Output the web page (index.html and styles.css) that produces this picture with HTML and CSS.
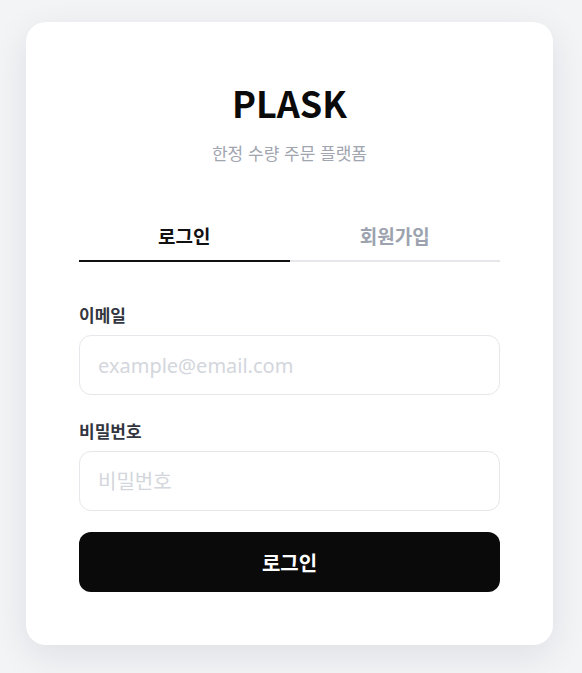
FILE: index.html
```html
<!DOCTYPE html>
<html lang="ko">
  <head>
    <meta charset="utf-8">
    <meta name="viewport" content="width=device-width, initial-scale=1">
    <title>PLASK 로그인</title>
    <link rel="stylesheet" href="styles.css">
  </head>
  <body>
    <main class="auth-card">
      <header class="brand">
        <h1 class="brand-title">PLASK</h1>
        <p class="brand-tagline">한정 수량 주문 플랫폼</p>
      </header>

      <nav class="tabs" aria-label="인증">
        <button class="tab active" type="button" aria-current="page">로그인</button>
        <button class="tab" type="button">회원가입</button>
      </nav>

      <form class="login-form">
        <div class="field">
          <label class="field-label" for="email">이메일</label>
          <input class="field-input" id="email" type="email" placeholder="example@email.com">
        </div>
        <div class="field">
          <label class="field-label" for="password">비밀번호</label>
          <input class="field-input" id="password" type="password" placeholder="비밀번호">
        </div>
        <button class="submit" type="submit">로그인</button>
      </form>
    </main>
  </body>
</html>
```

FILE: styles.css
```css
body {
  margin: 0;
  padding: 22px 0 28px 26px;
  background: #f3f4f6;
  font-family: "Noto Sans CJK KR", "Noto Sans", sans-serif;
  color: #111;
}

.auth-card {
  box-sizing: border-box;
  width: 527px;
  padding: 59px 53px 53px;
  background: #fff;
  border-radius: 20px;
  box-shadow: 0 10px 36px rgba(15, 23, 42, 0.09);
}

.brand {
  text-align: center;
}

.brand-title {
  margin: 0;
  font-size: 36px;
  line-height: 43px;
  font-weight: 700;
  color: #0a0a0a;
}

.brand-tagline {
  margin: 18px 0 0;
  font-size: 17px;
  line-height: 22px;
  color: #a1a5b0;
}

.tabs {
  display: grid;
  grid-template-columns: 1fr 1fr;
  margin-top: 48px;
}

.tab {
  padding: 12px 0;
  background: none;
  border: 0;
  border-bottom: 2px solid #e5e7eb;
  font: inherit;
  font-size: 19px;
  line-height: 24px;
  font-weight: 700;
  color: #9ca3af;
  cursor: pointer;
}

.tab.active {
  color: #111;
  border-bottom-color: #111;
}

.login-form {
  display: flex;
  flex-direction: column;
  gap: 24px;
  margin-top: 41px;
}

.field {
  display: flex;
  flex-direction: column;
  gap: 8px;
}

.field-label {
  font-size: 17px;
  line-height: 24px;
  font-weight: 700;
  color: #333640;
}

.field-input {
  box-sizing: border-box;
  height: 60px;
  padding: 0 18px;
  border: 1px solid #e5e7eb;
  border-radius: 12px;
  font-family: "Noto Sans", "Noto Sans CJK KR", sans-serif;
  font-size: 20px;
  color: #111;
  outline: none;
}

.field-input::placeholder {
  color: #d3d6dc;
}

.submit {
  height: 60px;
  margin-top: -3px;
  border: 0;
  border-radius: 12px;
  background: #0a0a0a;
  font: inherit;
  font-size: 20px;
  font-weight: 700;
  color: #fff;
  cursor: pointer;
}
```
